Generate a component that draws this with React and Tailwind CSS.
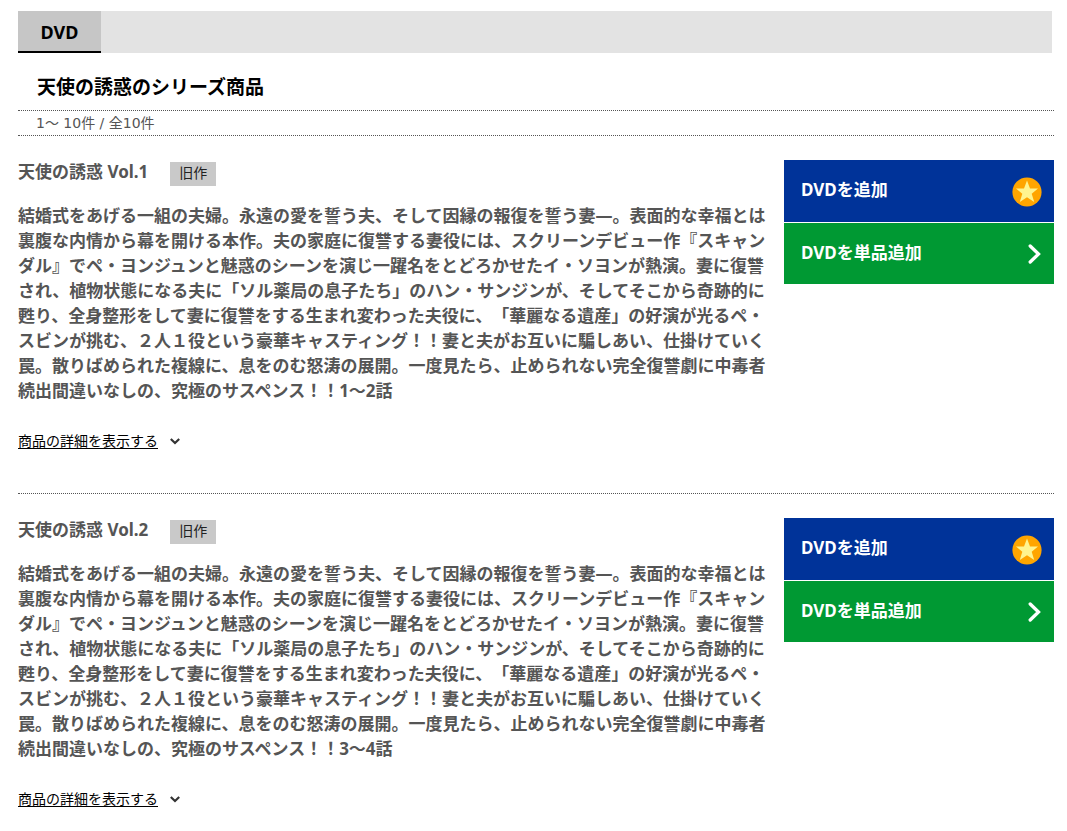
const SYNOPSIS =
  "結婚式をあげる一組の夫婦。永遠の愛を誓う夫、そして因縁の報復を誓う妻―。表面的な幸福とは裏腹な内情から幕を開ける本作。夫の家庭に復讐する妻役には、スクリーンデビュー作『スキャンダル』でペ・ヨンジュンと魅惑のシーンを演じ一躍名をとどろかせたイ・ソヨンが熱演。妻に復讐され、植物状態になる夫に「ソル薬局の息子たち」のハン・サンジンが、そしてそこから奇跡的に甦り、全身整形をして妻に復讐をする生まれ変わった夫役に、「華麗なる遺産」の好演が光るペ・スビンが挑む、２人１役という豪華キャスティング！！妻と夫がお互いに騙しあい、仕掛けていく罠。散りばめられた複線に、息をのむ怒涛の展開。一度見たら、止められない完全復讐劇に中毒者続出間違いなしの、究極のサスペンス！！";

const ITEMS = [
  { title: "天使の誘惑 Vol.1", episodes: "1〜2話" },
  { title: "天使の誘惑 Vol.2", episodes: "3〜4話" },
];

function StarIcon() {
  return (
    <svg className="size-[30px]" viewBox="0 0 30 30" aria-hidden="true">
      <circle cx="15" cy="15" r="14.6" fill="#ffa500" />
      <path
        d="M15 3.5l3 8h8l-6.3 5.2 2.5 8.3-7.2-4.8-7.2 4.8 2.5-8.3L4 11.5h8z"
        fill="#fff48f"
      />
    </svg>
  );
}

function ChevronRight() {
  return (
    <svg className="h-5 w-[14px]" viewBox="0 0 14 20" fill="none" aria-hidden="true">
      <path d="M2.2 2L10.5 10l-8.3 8" stroke="#fff" strokeWidth="3.3" strokeLinecap="round" />
    </svg>
  );
}

function ChevronDown() {
  return (
    <svg className="h-2 w-[10px]" viewBox="0 0 10 8" fill="none" aria-hidden="true">
      <path d="M0.8 2L5 6l4.2-4" stroke="#333" strokeWidth="2.2" />
    </svg>
  );
}

function Item({ title, episodes }) {
  return (
    <article className="flex gap-[10px] border-b border-dotted border-[#555] pt-6 pb-[41px]">
      <div className="max-w-[756px] min-w-0 flex-1">
        <div className="flex items-start gap-[22px]">
          <h3 className="text-[17px] leading-6 font-bold">{title}</h3>
          <span className="mt-[2px] h-6 w-[46px] bg-[#c9c9c9] text-center text-[14px] leading-[22px] text-[#222]">
            旧作
          </span>
        </div>
        <p className="mt-[17px] text-[17px] leading-[25px] font-bold">{SYNOPSIS + episodes}</p>
        <a href="#details" className="mt-[27px] inline-flex items-center gap-3 text-[14px] leading-[22px] text-black">
          <span className="underline underline-offset-2">商品の詳細を表示する</span>
          <ChevronDown />
        </a>
      </div>
      <div className="ml-auto flex w-[270px] shrink-0 flex-col gap-px text-[17px] leading-6 font-bold text-white">
        <button type="button" className="flex h-[62px] items-center justify-between bg-[#003399] pt-px pr-3 pl-[17px]">
          <span className="pb-1">DVDを追加</span>
          <StarIcon />
        </button>
        <button type="button" className="flex h-[61px] items-center justify-between bg-[#009933] pr-3 pl-[17px]">
          <span className="pb-[2px]">DVDを単品追加</span>
          <ChevronRight />
        </button>
      </div>
    </article>
  );
}

export default function App() {
  return (
    <main className="bg-white pt-[11px] pr-[13px] pl-[18px] font-['Noto_Sans','Noto_Sans_CJK_JP',sans-serif] text-[#555] [text-spacing-trim:space-all]" lang="ja">
      <nav className="mr-[2px] flex bg-[#e3e3e3]">
        <button type="button" className="h-[42px] w-[83px] border-b-2 border-black bg-[#c6c6c6] pt-[2px] text-[18px] font-bold text-black">
          DVD
        </button>
      </nav>
      <h2 className="pt-5 pb-[9px] pl-[19px] text-[19px] leading-7 font-bold text-black">天使の誘惑のシリーズ商品</h2>
      <p className="border-y border-dotted border-[#555] pl-[18px] font-['DejaVu_Sans','Noto_Sans_CJK_JP',sans-serif] text-[14px] leading-6">
        1〜 10件 / 全10件
      </p>
      {ITEMS.map((item) => (
        <Item key={item.title} {...item} />
      ))}
    </main>
  );
}
